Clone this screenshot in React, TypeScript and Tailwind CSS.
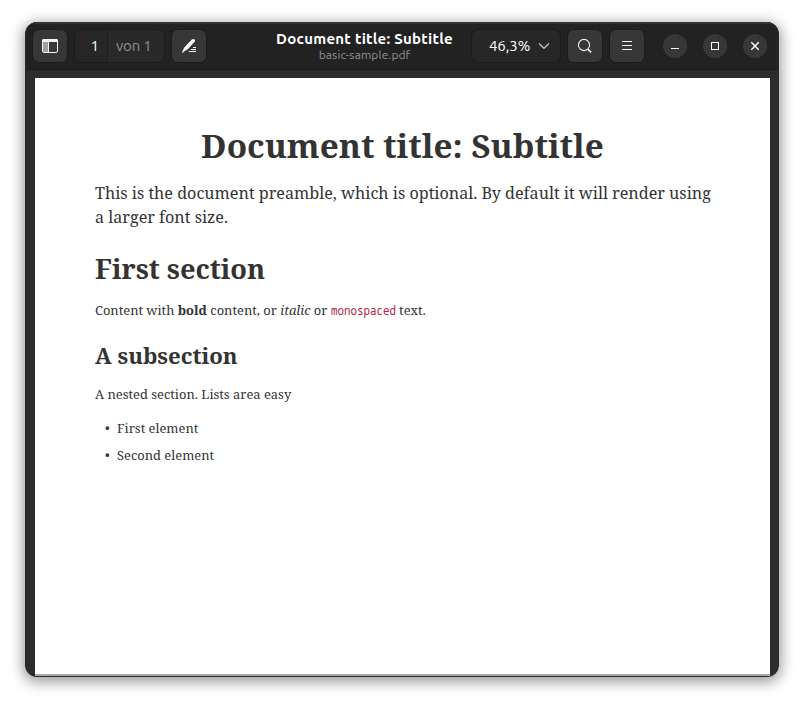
import type { ReactNode } from "react";

function ToolButton({ label, className = "", children }: { label: string; className?: string; children: ReactNode }) {
  return (
    <button
      aria-label={label}
      className={`flex h-[34px] w-9 items-center justify-center rounded-[7px] border border-[#1b1b1b] bg-[#373737] text-[#f4f4f4] ${className}`}
    >
      {children}
    </button>
  );
}

function WindowButton({ label, children }: { label: string; children: ReactNode }) {
  return (
    <button aria-label={label} className="flex size-6 items-center justify-center rounded-full bg-[#373737] text-white">
      <svg width="24" height="24" viewBox="0 0 24 24" fill="none" stroke="currentColor">
        {children}
      </svg>
    </button>
  );
}

function HeaderBar() {
  return (
    <header className="flex h-[48px] shrink-0 justify-between border-b border-[#191919] bg-[#222222] pr-[11px] pl-[6px] font-['Ubuntu','Noto_Sans',sans-serif] shadow-[inset_0_2px_0_#343434]">
      <div className="flex pt-[7px]">
        <ToolButton label="Sidebar">
          <svg width="16" height="16" viewBox="0 0 16 16">
            <rect x="0.5" y="1.5" width="15" height="13" rx="1.5" fill="none" stroke="currentColor" />
            <path d="M0 4V2.5C0 1.5 .8 1 1.6 1h12.8c1 0 1.6.6 1.6 1.5V4Z" fill="currentColor" />
            <path d="M1 4h5v10H1Z" fill="#a0a0a0" />
            <path d="M6.5 4v10" stroke="currentColor" />
          </svg>
        </ToolButton>
        <div className="ml-[6px] flex h-[34px] w-[91px] rounded-[7px] border border-[#1b1b1b] bg-[#292929] text-[15px] leading-[32px]">
          <span className="w-[33px] rounded-l-[6px] border-r border-[#1b1b1b] bg-[#262626] pr-[8px] text-right text-white">1</span>
          <span className="pl-[8px] tracking-[-0.2px] text-[#919191]">von 1</span>
        </div>
        <ToolButton label="Annotate" className="ml-[6px]">
          <svg width="16" height="16" viewBox="0 0 16 16" fill="currentColor">
            <path d="M10.8 1.6c.9-.9 2-.9 2.7-.2.8.7.7 1.7-.1 2.6L6.6 11.6 3.6 13 1.9 14.7.9 14.5 1.9 12.5l1.1-2.8Z" />
            <path d="M12 9h3v1h-3ZM10 11h5v1h-5ZM8 13h7v1H8Z" />
          </svg>
        </ToolButton>
      </div>

      <div className="ml-[51px] w-[178px] pt-[7px] text-center">
        <h1 className="text-[15px] leading-[20px] font-bold tracking-[0.26px] whitespace-nowrap text-white">
          Document title: Subtitle
        </h1>
        <p className="text-[12px] leading-[12px] tracking-[0.08px] text-[#919191]">basic-sample.pdf</p>
      </div>

      <div className="flex pt-[7px]">
        <div className="flex h-[34px] w-[90px] items-center rounded-[7px] border border-[#1b1b1b] bg-[#272727] pl-[17px] text-[15px] text-white">
          <span className="tracking-[-0.1px]">46,3%</span>
          <svg className="ml-[8px]" width="12" height="8" viewBox="0 0 12 8" fill="none" stroke="#c4c4c4" strokeWidth="1.2">
            <path d="m1 1.5 5 4.8 5-4.8" />
          </svg>
        </div>
        <ToolButton label="Search" className="ml-[6px]">
          <svg width="16" height="16" viewBox="0 0 16 16" fill="none" stroke="currentColor" strokeWidth="1.1">
            <circle cx="7" cy="7" r="5.6" />
            <path d="m11 11.3 3.2 3" strokeWidth="1.6" />
          </svg>
        </ToolButton>
        <ToolButton label="Menu" className="ml-[6px]">
          <svg width="16" height="16" viewBox="0 0 16 16" fill="none" stroke="currentColor">
            <path d="M3 3.5h10M3 7.5h10M3 11.5h10" />
          </svg>
        </ToolButton>
        <div className="ml-[18px] flex gap-4 pt-[5px]">
          <WindowButton label="Minimize">
            <path d="M8 14.5h8" />
          </WindowButton>
          <WindowButton label="Maximize">
            <rect x="8.5" y="8.5" width="7" height="7" />
          </WindowButton>
          <WindowButton label="Close">
            <path d="m8.3 8.3 7.4 7.4m0-7.4-7.4 7.4" strokeWidth="1.4" />
          </WindowButton>
        </div>
      </div>
    </header>
  );
}

function DocumentPage() {
  return (
    <article className="mt-2 mr-2 ml-[9px] h-[598px] border-b-2 border-[#a9aaa6] bg-white px-[60px] pt-[47px] font-['Noto_Serif','DejaVu_Serif',serif] text-[12.92px] leading-[20px] text-[#333333]">
      <h1 className="text-center text-[33.3px] leading-[40px] font-bold whitespace-nowrap">Document title: Subtitle</h1>
      <p className="mt-4 text-[16.15px] leading-[24px] whitespace-nowrap">
        This is the document preamble, which is optional. By default it will render using
        <br />a larger font size.
      </p>
      <h2 className="mt-6 text-[27.2px] leading-[32px] font-bold">First section</h2>
      <p className="mt-[15px] whitespace-nowrap">
        Content with <strong>bold</strong> content, or <em>italic</em> or{" "}
        <code className="inline-block w-[65px] origin-left scale-x-[0.833] font-['Noto_Sans_Mono',monospace] text-[13px] leading-[20px] text-[#b12146]">
          monospaced
        </code>{" "}
        text.
      </p>
      <h3 className="mt-[22px] text-[22.2px] leading-[28px] font-bold">A subsection</h3>
      <p className="mt-[14px]">A nested section. Lists area easy</p>
      <ul className="mt-[14px] flex flex-col gap-[7px]">
        {["First element", "Second element"].map((item) => (
          <li key={item} className="flex pl-[10px]">
            <span className="w-3">•</span>
            {item}
          </li>
        ))}
      </ul>
    </article>
  );
}

export default function App() {
  return (
    <main className="h-[705px] w-[804px] overflow-hidden bg-white pt-[22px] pl-[25px]">
      <div className="h-[655px] w-[754px] rounded-[12px] shadow-[0_3px_14px_2px_rgba(0,0,0,0.4)]">
        <div className="flex h-full flex-col overflow-hidden rounded-[12px] border border-t-0 border-[#2c2c2c] bg-[#2c2c2c]">
          <HeaderBar />
          <DocumentPage />
        </div>
      </div>
    </main>
  );
}
